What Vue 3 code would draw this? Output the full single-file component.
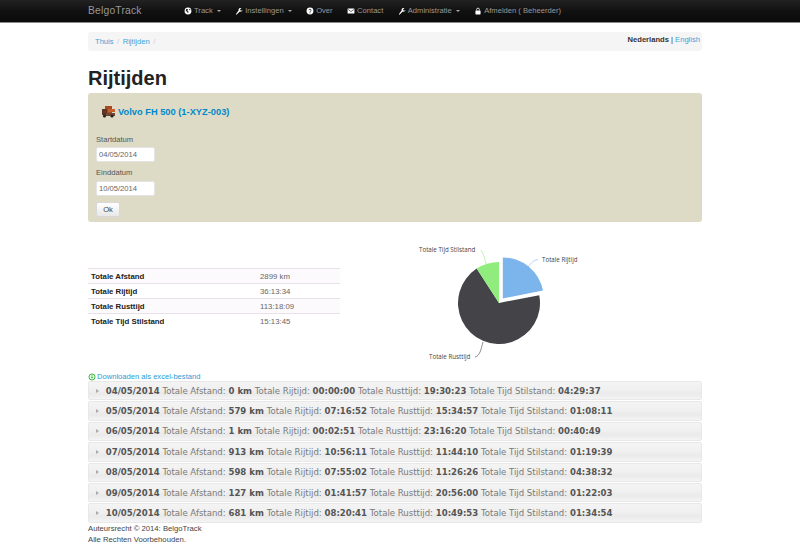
<script setup>
const navItems = [
  { label: 'Track', icon: 'globe', caret: true },
  { label: 'Instellingen', icon: 'wrench', caret: true },
  { label: 'Over', icon: 'question' },
  { label: 'Contact', icon: 'mail' },
  { label: 'Administratie', icon: 'wrench', caret: true },
  { label: 'Afmelden ( Beheerder)', icon: 'lock' },
]

const totals = [
  ['Totale Afstand', '2899 km'],
  ['Totale Rijtijd', '36:13:34'],
  ['Totale Rusttijd', '113:18:09'],
  ['Totale Tijd Stilstand', '15:13:45'],
]

const days = [
  ['04/05/2014', '0 km', '00:00:00', '19:30:23', '04:29:37'],
  ['05/05/2014', '579 km', '07:16:52', '15:34:57', '01:08:11'],
  ['06/05/2014', '1 km', '00:02:51', '23:16:20', '00:40:49'],
  ['07/05/2014', '913 km', '10:56:11', '11:44:10', '01:19:39'],
  ['08/05/2014', '598 km', '07:55:02', '11:26:26', '04:38:32'],
  ['09/05/2014', '127 km', '01:41:57', '20:56:00', '01:22:03'],
  ['10/05/2014', '681 km', '08:20:41', '10:49:53', '01:34:54'],
]

function slice(cx, cy, r, from, to) {
  const rad = (a) => ((a - 90) * Math.PI) / 180
  const x1 = cx + r * Math.cos(rad(from))
  const y1 = cy + r * Math.sin(rad(from))
  const x2 = cx + r * Math.cos(rad(to))
  const y2 = cy + r * Math.sin(rad(to))
  const large = to - from > 180 ? 1 : 0
  return `M${cx} ${cy}L${x1.toFixed(2)} ${y1.toFixed(2)}A${r} ${r} 0 ${large} 1 ${x2.toFixed(2)} ${y2.toFixed(2)}Z`
}

const blue = slice(103.8, 55.4, 41, 0, 79)
const dark = slice(100, 60, 41, 79, 327)
const green = slice(100, 60, 41, 327, 360)
</script>

<template>
  <div class="page">
    <header class="navbar">
      <div class="nav-inner">
        <span class="brand">BelgoTrack</span>
        <nav class="nav">
          <span v-for="item in navItems" :key="item.label" class="nav-item">
            <svg class="nav-icon" viewBox="0 0 14 14">
              <template v-if="item.icon === 'globe'">
                <circle cx="7" cy="7" r="6" fill="#fff" />
                <path d="M4 3l3 1-1 3 2 1-1 3-2-3-2-1zM9 3l2 1 0 2-2-1z" fill="#222" />
              </template>
              <path v-else-if="item.icon === 'wrench'" d="M1.5 12.5l1 1 6-5.5c2 .8 4.2-.4 4.6-2.600l-2.100 1.300-1.800-1 0-2 2.200-1.400C9 .9 6.500 2.400 6.300 4.500c0 .5 0 .9.2 1.300z" fill="#fff" />
              <template v-else-if="item.icon === 'question'">
                <circle cx="7" cy="7" r="6" fill="#fff" />
                <path d="M5 5.500c.2-2 3.800-2 4 0 0 1.500-2 1.500-2 3" fill="none" stroke="#222" stroke-width="1.400" />
                <rect x="6.200" y="9.500" width="1.600" height="1.500" fill="#222" />
              </template>
              <template v-else-if="item.icon === 'mail'">
                <rect x="1" y="2.500" width="12" height="9" rx="1" fill="#fff" />
                <path d="M1.500 4l5.500 4 5.500-4" fill="none" stroke="#222" stroke-width="1.100" />
              </template>
              <template v-else>
                <path d="M4.500 6V4.500a2.500 2.500 0 0 1 5 0V6" fill="none" stroke="#fff" stroke-width="1.400" />
                <rect x="2.500" y="6" width="9" height="7" rx="1" fill="#fff" />
              </template>
            </svg>
            {{ item.label }}
            <i v-if="item.caret" class="caret"></i>
          </span>
        </nav>
      </div>
    </header>

    <main class="container">
      <div class="breadcrumb">
        <div class="crumbs">
          <a>Thuis</a><span class="sep">/</span><a>Rijtijden</a><span class="sep">/</span>
        </div>
        <div class="lang"><b>Nederlands</b> | <a>English</a></div>
      </div>

      <h1>Rijtijden</h1>

      <section class="panel">
        <div class="truck-title">
          <svg class="truck" viewBox="0 0 13 12">
            <rect x="3" y="0" width="7" height="8" fill="#a8491f" />
            <rect x="0" y="3" width="5" height="6" fill="#5e3526" />
            <rect x="6" y="3" width="7" height="3" fill="#c4602c" />
            <rect x="4" y="7" width="9" height="3" fill="#6d4a38" />
            <circle cx="2.500" cy="10" r="1.600" fill="#2a211d" />
            <circle cx="10" cy="10" r="1.600" fill="#2a211d" />
          </svg>
          <a>Volvo FH 500 (1-XYZ-003)</a>
        </div>
        <label class="field-label">Startdatum</label>
        <input class="date-input" type="text" value="04/05/2014" />
        <label class="field-label second">Einddatum</label>
        <input class="date-input second" type="text" value="10/05/2014" />
        <button class="ok-button" type="button">Ok</button>
      </section>

      <section class="stats">
        <table class="totals">
          <tbody>
            <tr v-for="row in totals" :key="row[0]">
              <th>{{ row[0] }}</th>
              <td>{{ row[1] }}</td>
            </tr>
          </tbody>
        </table>
        <svg class="chart" viewBox="0 0 200 130" width="200" height="130">
          <path :d="blue" fill="#7cb5ec" />
          <path :d="dark" fill="#434348" />
          <path :d="green" fill="#90ed7d" />
          <path d="M129 24C132 20 135 17 139 16.500" fill="none" stroke="#7cb5ec" stroke-width=".6" />
          <path d="M88 24C86 17 85 11 82 7" fill="none" stroke="#90ed7d" stroke-width=".6" />
          <path d="M84 99C82 106 81 113 76 114" fill="none" stroke="#434348" stroke-width=".6" />
          <text x="143" y="19" class="pie-label">Totale Rijtijd</text>
          <text x="20" y="8.500" class="pie-label">Totale Tijd Stilstand</text>
          <text x="30" y="115.500" class="pie-label">Totale Rusttijd</text>
        </svg>
      </section>

      <div class="download">
        <svg class="download-icon" viewBox="0 0 10 10">
          <circle cx="5" cy="5" r="3.800" fill="none" stroke="#2cb82c" stroke-width="1.200" />
          <path d="M5 2.500v4M3.500 5L5 6.500 6.500 5" fill="none" stroke="#2cb82c" stroke-width="1" />
        </svg>
        <a>Downloaden als excel-bestand</a>
      </div>

      <div class="days">
        <div v-for="day in days" :key="day[0]" class="day">
          <i class="arrow"></i>
          <b>{{ day[0] }}</b> Totale Afstand: <b>{{ day[1] }}</b> Totale Rijtijd: <b>{{ day[2] }}</b> Totale Rusttijd: <b>{{ day[3] }}</b> Totale Tijd Stilstand: <b>{{ day[4] }}</b>
        </div>
      </div>

      <footer class="footer">
        Auteursrecht © 2014: BelgoTrack<br />
        Alle Rechten Voorbehouden.
      </footer>
    </main>
  </div>
</template>

<style>
html,
body {
  margin: 0;
  background: #fff;
}
</style>

<style scoped>
.page {
  height: 544px;
  overflow: hidden;
  color: #333;
  font-family: 'Liberation Sans', Arial, sans-serif;
  font-size: 7.600px;
  line-height: 12px;
}

a {
  color: #0088cc;
}

.navbar {
  height: 23px;
  background: linear-gradient(#222222, #111111 50%, #0a0a0a);
  border-bottom: 1px solid #8a8a8a;
  box-sizing: border-box;
}

.nav-inner {
  width: 614px;
  margin-left: 88px;
  display: flex;
  align-items: center;
  height: 22px;
}

.brand {
  width: 96px;
  color: #999;
  font-size: 10.300px;
  letter-spacing: 0.2px;
}

.nav {
  display: flex;
  gap: 14.500px;
  color: #999;
}

.nav-item {
  display: flex;
  align-items: center;
}

.nav-icon {
  width: 8px;
  height: 8px;
  margin-right: 2px;
}

.caret {
  width: 0;
  height: 0;
  margin-left: 4px;
  border-top: 2.500px solid #aaa;
  border-left: 2.500px solid transparent;
  border-right: 2.500px solid transparent;
}

.container {
  width: 614px;
  margin-left: 88px;
}

.breadcrumb {
  display: flex;
  justify-content: space-between;
  height: 19px;
  margin-top: 9px;
  padding: 0 2px 0 7px;
  background: #f5f5f5;
  border-radius: 3px;
  box-sizing: border-box;
}

.crumbs {
  padding-top: 4px;
}

.crumbs a {
  color: #3ba4d8;
}

.sep {
  margin: 0 3.500px;
  color: #ccc;
}

.lang {
  padding-top: 2px;
  color: #333;
}

.lang a {
  color: #3ba4d8;
}

h1 {
  margin: 16px 0 0;
  height: 26px;
  color: #222;
  font-size: 20px;
  line-height: 22px;
  font-weight: bold;
}

.panel {
  height: 129px;
  box-sizing: border-box;
  padding: 11px 8px 0;
  background: #dddbc5;
  border-radius: 3px;
}

.truck-title {
  display: flex;
  align-items: center;
  height: 16px;
  margin-left: 6px;
  color: #0088cc;
  font-size: 9.300px;
  font-weight: bold;
}

.truck {
  width: 13px;
  height: 12px;
  margin-right: 3px;
}

.field-label {
  display: block;
  margin-top: 14px;
  color: #555;
  line-height: 12px;
}

.field-label.second {
  margin-top: 5px;
}

.date-input {
  display: block;
  width: 59px;
  height: 15px;
  box-sizing: border-box;
  margin-top: 1px;
  padding: 0 2px;
  border: 1px solid #e4e4e4;
  border-radius: 2px;
  background: #fff;
  color: #666;
  font: 7.600px 'Liberation Sans', Arial, sans-serif;
}

.date-input.second {
  margin-top: 2px;
}

.ok-button {
  display: block;
  width: 24px;
  height: 15px;
  margin-top: 6px;
  padding: 0;
  border: 1px solid #d8d8d8;
  border-radius: 2px;
  background: linear-gradient(#ffffff, #e8e8e8);
  color: #444;
  font: 7.600px 'Liberation Sans', Arial, sans-serif;
}

.stats {
  display: flex;
  height: 128px;
  margin-top: 21px;
}

.totals {
  align-self: flex-start;
  width: 252px;
  margin-top: 25px;
  border-collapse: collapse;
  font-size: 7.800px;
}

.totals th,
.totals td {
  height: 13px;
  padding: 1px 3px 0;
  border-top: 1px solid #e8e2e8;
  background: #fdfafd;
  text-align: left;
  line-height: 12px;
}

.totals tr:nth-child(even) th,
.totals tr:nth-child(even) td {
  background: #fff;
}

.totals th {
  width: 163px;
  color: #222;
}

.totals td {
  color: #666;
}

.chart {
  margin-left: 59px;
  flex: none;
}

.pie-label {
  fill: #444;
  font-family: 'Open Sans', sans-serif;
  font-size: 6.200px;
}

.download {
  display: flex;
  align-items: center;
  height: 10px;
  margin-top: 1px;
  color: #3ba4d8;
}

.download a {
  color: #2a9ad4;
}

.download-icon {
  width: 8px;
  height: 8px;
  margin-right: 1px;
}

.days {
  display: grid;
  row-gap: 1px;
  margin-top: -1px;
}

.day {
  display: flex;
  gap: 2.800px;
  align-items: center;
  height: 19.400px;
  padding-left: 7px;
  box-sizing: border-box;
  border: 1px solid #e8e8e8;
  border-radius: 2px;
  background: linear-gradient(#f4f4f4, #f0f0f0 45%, #eaeaea 70%, #f4f4f4);
  color: #7a7a7a;
  font-family: 'DejaVu Sans', Verdana, sans-serif;
  font-size: 8.550px;
  white-space: nowrap;
}

.day b {
  color: #555;
}

.arrow {
  width: 0;
  height: 0;
  margin-right: 4px;
  border-left: 3px solid #aaa;
  border-top: 2px solid transparent;
  border-bottom: 2px solid transparent;
}

.footer {
  color: #444;
  font-size: 7.700px;
  line-height: 11px;
}
</style>
